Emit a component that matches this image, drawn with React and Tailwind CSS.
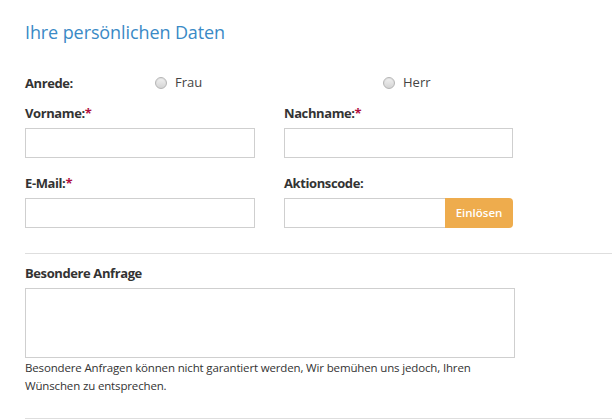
import React from "react";

function Radio({ label }) {
  return (
    <label className="flex items-center">
      <span className="w-[12px] h-[12px] rounded-full border border-[#b5b5b5] bg-gradient-to-b from-[#f2f2f2] to-[#d4d4d4] shadow-[inset_0_1px_1px_rgba(0,0,0,0.08)]" />
      <span className="ml-[8px] text-[13px] text-[#444]">{label}</span>
    </label>
  );
}

function Label({ children, req }) {
  return (
    <div className="h-[18px] leading-[18px] text-[13px] font-bold text-[#333] tracking-[-0.4px]">
      {children}
      {req && <span className="text-[#b0103f]">*</span>}
    </div>
  );
}

function Input({ className = "" }) {
  return <div className={"h-[30px] border border-[#cfcfcf] bg-white " + className} />;
}

export default function App() {
  return (
    <div
      className="w-[612px] h-[419px] bg-white overflow-hidden relative"
      style={{ fontFamily: '"Open Sans", "Liberation Sans", sans-serif' }}
    >
      <div className="pl-[25px]">
        <h2 className="pt-[20px] h-[24px] leading-[24px] text-[18px] text-[#3a8ac6] tracking-[-0.1px] box-content">
          Ihre persönlichen Daten
        </h2>
        <div className="mt-[30px] flex items-center h-[18px]">
          <div className="w-[130px]">
            <Label>Anrede:</Label>
          </div>
          <div className="w-[228px]">
            <Radio label="Frau" />
          </div>
          <Radio label="Herr" />
        </div>
        <div className="mt-[12px] grid grid-cols-[230px_229px] gap-x-[29px]">
          <div>
            <Label req>Vorname:</Label>
            <Input className="mt-[6px]" />
          </div>
          <div>
            <Label req>Nachname:</Label>
            <Input className="mt-[6px]" />
          </div>
        </div>
        <div className="mt-[16px] grid grid-cols-[230px_229px] gap-x-[29px]">
          <div>
            <Label req>E-Mail:</Label>
            <Input className="mt-[6px]" />
          </div>
          <div>
            <Label>Aktionscode:</Label>
            <div className="mt-[6px] flex h-[30px]">
              <div className="flex-1 border border-[#cfcfcf] border-r-0" />
              <button className="w-[68px] h-[30px] rounded-r-[4px] bg-[#eeac4d] text-white text-[11.5px] font-semibold">
                Einlösen
              </button>
            </div>
          </div>
        </div>
        <div className="mt-[25px] h-px bg-[#dedede]" />
        <div className="mt-[10px]">
          <Label>Besondere Anfrage</Label>
        </div>
        <div className="mt-[6px] w-[490px] h-[70px] border border-[#cfcfcf]" />
        <p className="mt-[1px] w-[480px] text-[11.5px] leading-[18px] text-[#333] tracking-[-0.15px]">
          Besondere Anfragen können nicht garantiert werden, Wir bemühen uns jedoch, Ihren Wünschen zu entsprechen.
        </p>
        <div className="mt-[23px] h-px bg-[#dedede]" />
      </div>
    </div>
  );
}
